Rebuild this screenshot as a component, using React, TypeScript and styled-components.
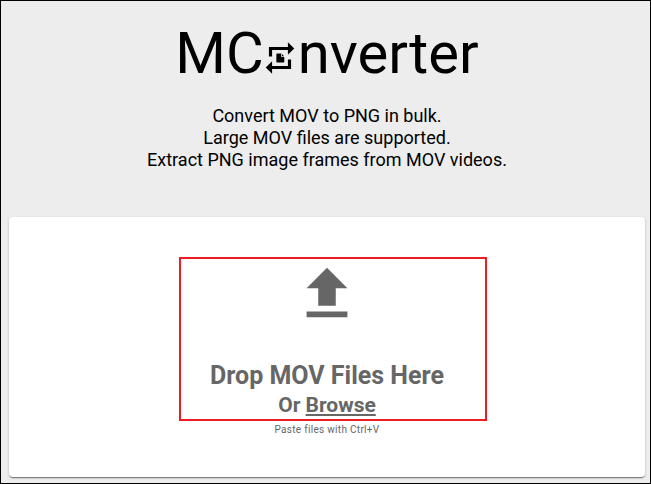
import React from "react";
import styled, { createGlobalStyle } from "styled-components";

const GlobalStyle = createGlobalStyle`
  *, *::before, *::after { box-sizing: border-box; }
  html, body { margin: 0; }
  body {
    background: #ededed;
    color: #000;
    font-family: Roboto, "Liberation Sans", sans-serif;
  }
`;

const Page = styled.main`
  min-height: 100vh;
  display: flex;
  flex-direction: column;
  border: 1px solid #000;
  padding: 16px 5px 6px 8px;
`;

const Header = styled.header`
  text-align: center;
`;

const Title = styled.h1`
  display: flex;
  justify-content: center;
  align-items: center;
  margin: 0;
  font-size: 58px;
  line-height: 72px;
  font-weight: 400;
`;

const LogoIcon = styled.svg`
  width: 38px;
  height: 38px;
  margin: 10px -1px 0 -3px;
`;

const Intro = styled.p`
  margin: 16px 0 0;
  font-size: 18px;
  line-height: 22px;
`;

const DropCard = styled.section`
  flex: 1;
  display: flex;
  flex-direction: column;
  align-items: center;
  margin-top: 46px;
  padding: 40px 0 32px;
  border-radius: 4px;
  background: #fff;
  color: #666;
  box-shadow: 0 2px 1px -1px rgba(0, 0, 0, 0.3), 0 1px 1px rgba(0, 0, 0, 0.2),
    0 1px 3px rgba(0, 0, 0, 0.18);
`;

const Highlight = styled.div`
  display: flex;
  flex-direction: column;
  align-items: center;
  width: 308px;
  max-width: 100%;
  margin-left: 12px;
  padding-right: 12px;
  border: 2px solid #ed1c24;
  text-align: center;
`;

const UploadIcon = styled.svg`
  width: 70px;
  height: 70px;
`;

const DropTitle = styled.h2`
  margin: 31px 0 0;
  font-size: 25px;
  line-height: 32px;
  font-weight: 700;
`;

const BrowseLine = styled.p`
  margin: 0;
  font-size: 21px;
  line-height: 27px;
  font-weight: 700;
`;

const BrowseButton = styled.button`
  padding: 0;
  border: 0;
  background: none;
  color: inherit;
  font: inherit;
  text-decoration: underline;
  cursor: pointer;
`;

const Hint = styled.p`
  margin: 0;
  font-size: 10px;
  line-height: 17px;
  letter-spacing: 0.03em;
`;

export default function App() {
  return (
    <>
      <GlobalStyle />
      <Page>
        <Header>
          <Title aria-label="MConverter">
            <span>MC</span>
            <LogoIcon viewBox="0 0 24 24" aria-hidden="true">
              <path d="M7 7h10v3l4-4-4-4v3H5v6h2V7zm10 10H7v-3l-4 4 4 4v-3h12v-6h-2v4z" />
              <path d="M10.2 9.2h2.6v2.2h1.900v2.900q0 .5-.5.5h-4q-.5 0-.5-.5v-4.600q0-.5.5-.5zM13.300 9.400l1.300 1.500h-1.300z" />
            </LogoIcon>
            <span>nverter</span>
          </Title>
          <Intro>
            Convert MOV to PNG in bulk.
            <br />
            Large MOV files are supported.
            <br />
            Extract PNG image frames from MOV videos.
          </Intro>
        </Header>
        <DropCard>
          <Highlight>
            <UploadIcon viewBox="0 0 24 24" fill="currentColor" aria-hidden="true">
              <path d="M9 16h6v-6h4l-7-7-7 7h4zm-4 2h14v2H5z" />
            </UploadIcon>
            <DropTitle>Drop MOV Files Here</DropTitle>
            <BrowseLine>
              Or <BrowseButton type="button">Browse</BrowseButton>
            </BrowseLine>
          </Highlight>
          <Hint>Paste files with Ctrl+V</Hint>
        </DropCard>
      </Page>
    </>
  );
}
